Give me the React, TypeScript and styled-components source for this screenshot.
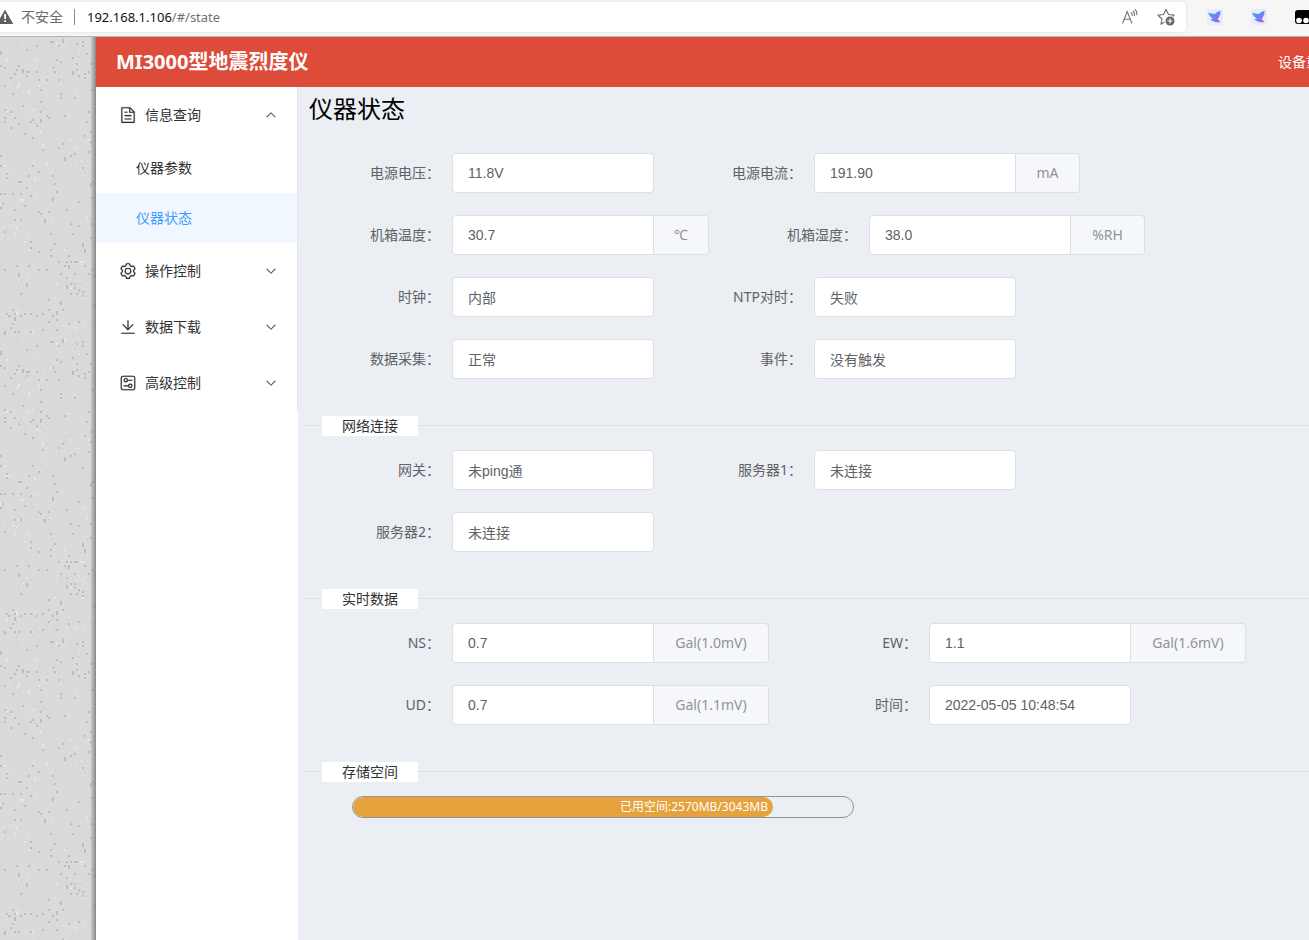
import React, { useId } from 'react';
import styled, { createGlobalStyle } from 'styled-components';

const uiFont = '"Noto Sans", "Noto Sans CJK SC", sans-serif';
const fieldFont = '"Liberation Sans", "Noto Sans CJK SC", sans-serif';

const GlobalStyle = createGlobalStyle`
  *, *::before, *::after { box-sizing: border-box; }
  body {
    margin: 0;
    font-family: ${uiFont};
    font-size: 14px;
    line-height: 20px;
    color: #303133;
    overflow: hidden;
  }
  button { font: inherit; color: inherit; border: 0; background: none; padding: 0; cursor: pointer; }
  svg { display: block; flex: none; }
`;

const Window = styled.div`
  display: flex;
  flex-direction: column;
  min-height: 100vh;
`;

/* Browser toolbar */
const BrowserBar = styled.div`
  display: flex;
  align-items: center;
  height: 37px;
  padding: 2px 0 4px;
  overflow: hidden;
  background: #f6f6f6;
  border-bottom: 1px solid #b4b4b4;
`;

const AddressField = styled.div`
  display: flex;
  align-items: center;
  flex: 1;
  height: 30px;
  padding-right: 11px;
  background: #fff;
  border-radius: 0 4px 4px 0;
  box-shadow: 0 0 3px rgba(0, 0, 0, 0.12);
  white-space: nowrap;
`;

const Insecure = styled.span`
  display: flex;
  align-items: center;
  gap: 7px;
  color: #6a6a6a;
`;

const Separator = styled.span`
  width: 1px;
  height: 16px;
  margin: 0 12px 0 11px;
  background: #8a8a8a;
`;

const Url = styled.span`
  flex: 1;
  font-size: 13px;
  color: #6f6f6f;
  b { font-weight: 400; color: #111; }
`;

const AddressActions = styled.span`
  display: flex;
  gap: 18px;
`;

const Extensions = styled.div`
  display: flex;
  align-items: center;
  flex: none;
  gap: 28px;
  width: 123px;
  padding-left: 21px;
`;

/* Page */
const Desktop = styled.div`
  display: flex;
  flex: 1;
`;

const Wallpaper = styled.div`
  position: relative;
  flex: none;
  width: 96px;
  overflow: hidden;
  background: #dadada;
  svg { position: absolute; inset: 0; }
  &::after {
    content: '';
    position: absolute;
    inset: 0 0 0 auto;
    width: 6px;
    background: linear-gradient(to right, rgba(90, 90, 90, 0), rgba(90, 90, 90, 0.65));
  }
`;

const Application = styled.div`
  display: flex;
  flex-direction: column;
  flex: 1;
  min-width: 0;
`;

const Header = styled.header`
  display: flex;
  align-items: center;
  justify-content: space-between;
  height: 50px;
  padding-left: 20px;
  overflow: hidden;
  color: #fff;
  background: #dd4b39;
`;

const Brand = styled.h1`
  margin: 0;
  font-size: 20px;
  line-height: 52px;
  font-weight: 700;
`;

const HeaderAction = styled.button`
  width: 31px;
  white-space: nowrap;
  text-align: left;
`;

const Body = styled.div`
  display: flex;
  flex: 1;
`;

const Aside = styled.aside`
  flex: none;
  width: 202px;
  background: #fff;
`;

const Menu = styled.nav`
  border-right: 1px solid #e6e6e6;
`;

const MenuGroup = styled.button`
  display: flex;
  align-items: center;
  gap: 8px;
  width: 100%;
  height: 56px;
  padding: 0 20px 0 23px;
  text-align: left;
  span { flex: 1; }
`;

const MenuItem = styled.a<{ $active?: boolean }>`
  display: block;
  height: 50px;
  padding-left: 40px;
  line-height: 50px;
  text-decoration: none;
  color: ${(p) => (p.$active ? '#409eff' : '#303133')};
  background: ${(p) => (p.$active ? '#f0f7ff' : '#fff')};
`;

const Main = styled.main`
  flex: 1;
  min-width: 0;
  padding-left: 4px;
  overflow: hidden;
  background: #ebeef3;
`;

const PageTitle = styled.h2`
  margin: 0 0 22px;
  padding-left: 7px;
  font-size: 24px;
  line-height: 44px;
  font-weight: 400;
  color: #000;
`;

const Row = styled.div`
  display: flex;
  gap: 10px;
  margin-bottom: 22px;
`;

const Item = styled.div`
  display: flex;
  flex: none;
`;

const Label = styled.label`
  width: 150px;
  padding-right: 12px;
  line-height: 40px;
  text-align: right;
  color: #606266;
`;

const Input = styled.input<{ $joined: boolean }>`
  width: 202px;
  height: 40px;
  padding: 0 15px;
  border: 1px solid #dcdfe6;
  border-radius: ${(p) => (p.$joined ? '4px 0 0 4px' : '4px')};
  outline: 0;
  font-family: ${fieldFont};
  font-size: 14px;
  color: #606266;
  background: #fff;
`;

const Unit = styled.span<{ $width: number }>`
  width: ${(p) => p.$width}px;
  border: 1px solid #dcdfe6;
  border-left: 0;
  border-radius: 0 4px 4px 0;
  line-height: 38px;
  text-align: center;
  color: #909399;
  background: #f5f7fa;
`;

const Divider = styled.div`
  display: flex;
  align-items: center;
  height: 1px;
  margin: 46px 0 24px;
  padding-left: 20px;
  background: #dcdfe6;
`;

const DividerText = styled.h3`
  margin: 0;
  padding: 0 20px;
  font-size: 14px;
  line-height: 20px;
  font-weight: 400;
  color: #303133;
  background: #fff;
`;

const Progress = styled.div`
  width: 502px;
  height: 22px;
  margin-left: 50px;
  border: 1px solid #909399;
  border-radius: 11px;
  overflow: hidden;
`;

const ProgressFill = styled.div`
  height: 20px;
  padding-right: 5px;
  border-radius: 10px;
  font-size: 12px;
  line-height: 20px;
  text-align: right;
  white-space: nowrap;
  color: #fff;
  background: #e6a23c;
`;

const glyphs = {
  document:
    'M832 384H576V128H192v768h640zm-26.496-64L640 154.496V320zM160 64h480l256 256v608a32 32 0 0 1-32 32H160a32 32 0 0 1-32-32V96a32 32 0 0 1 32-32m160 448h384v64H320zm0-192h160v64H320zm0 384h384v64H320z',
  setting:
    'M600.704 64a32 32 0 0 1 30.464 22.208l35.2 109.376c14.784 7.232 28.928 15.36 42.432 24.512l112.384-24.192a32 32 0 0 1 34.432 15.36L944.32 364.8a32 32 0 0 1-4.032 37.504l-77.12 85.12a357.12 357.12 0 0 1 0 49.024l77.12 85.248a32 32 0 0 1 4.032 37.504l-88.704 153.6a32 32 0 0 1-34.432 15.296L708.8 803.904c-13.44 9.088-27.648 17.28-42.368 24.512l-35.264 109.376A32 32 0 0 1 600.704 960H423.296a32 32 0 0 1-30.464-22.208L357.696 828.48a351.616 351.616 0 0 1-42.56-24.64l-112.32 24.256a32 32 0 0 1-34.432-15.36L79.68 659.2a32 32 0 0 1 4.032-37.504l77.12-85.248a357.12 357.12 0 0 1 0-48.896l-77.12-85.248A32 32 0 0 1 79.68 364.8l88.704-153.6a32 32 0 0 1 34.432-15.296l112.32 24.256c13.568-9.152 27.776-17.408 42.56-24.64l35.2-109.312A32 32 0 0 1 423.232 64H600.64zm-23.424 64H446.72l-36.352 113.088-24.512 11.968a294.113 294.113 0 0 0-34.816 20.096l-22.656 15.36-116.224-25.088-65.28 113.152 79.68 88.192-1.92 27.136a293.12 293.12 0 0 0 0 40.192l1.92 27.136-79.808 88.192 65.344 113.152 116.224-25.024 22.656 15.296a294.113 294.113 0 0 0 34.816 20.096l24.512 11.968L446.72 896h130.688l36.48-113.152 24.448-11.904a288.282 288.282 0 0 0 34.752-20.096l22.592-15.296 116.288 25.024 65.28-113.152-79.744-88.192 1.92-27.136a293.12 293.12 0 0 0 0-40.256l-1.92-27.136 79.808-88.128-65.344-113.152-116.288 24.96-22.592-15.232a287.616 287.616 0 0 0-34.752-20.096l-24.448-11.904L577.344 128zM512 320a192 192 0 1 1 0 384 192 192 0 0 1 0-384m0 64a128 128 0 1 0 0 256 128 128 0 0 0 0-256',
  download:
    'M160 832h704a32 32 0 1 1 0 64H160a32 32 0 1 1 0-64m384-253.696 236.288-236.352 45.248 45.248L508.8 704 192 387.2l45.248-45.248L480 584.704V128h64z',
  setUp:
    'M224 160a64 64 0 0 0-64 64v576a64 64 0 0 0 64 64h576a64 64 0 0 0 64-64V224a64 64 0 0 0-64-64zm0-64h576a128 128 0 0 1 128 128v576a128 128 0 0 1-128 128H224A128 128 0 0 1 96 800V224A128 128 0 0 1 224 96M384 416a64 64 0 1 0 0-128 64 64 0 0 0 0 128m0 64a128 128 0 1 1 0-256 128 128 0 0 1 0 256M480 320h256q32 0 32 32t-32 32H480q-32 0-32-32t32-32m160 416a64 64 0 1 0 0-128 64 64 0 0 0 0 128m0 64a128 128 0 1 1 0-256 128 128 0 0 1 0 256M288 640h256q32 0 32 32t-32 32H288q-32 0-32-32t32-32',
  arrow:
    'M831.872 340.864 512 652.672 192.128 340.864a30.592 30.592 0 0 0-42.752 0 29.12 29.12 0 0 0 0 41.6L489.664 714.24a32 32 0 0 0 44.672 0l340.288-331.712a29.12 29.12 0 0 0 0-41.728 30.592 30.592 0 0 0-42.752 0z',
};

type GlyphName = keyof typeof glyphs;

function Glyph({ name, size, flip }: { name: GlyphName; size: number; flip?: boolean }) {
  return (
    <svg width={size} height={size} viewBox="0 0 1024 1024" fill="currentColor" aria-hidden="true">
      <path
        d={glyphs[name]}
        transform={flip ? 'rotate(180 512 512)' : undefined}
        stroke="currentColor"
        strokeWidth={name === 'arrow' ? 24 : 8}
      />
    </svg>
  );
}

function Group({ icon, open, children }: { icon: GlyphName; open?: boolean; children: string }) {
  return (
    <MenuGroup type="button" aria-expanded={!!open}>
      <Glyph name={icon} size={18} />
      <span>{children}</span>
      <Glyph name="arrow" size={12} flip={open} />
    </MenuGroup>
  );
}

type FieldProps = { label: string; value: string; unit?: string; unitWidth?: number };

function Field({ label, value, unit, unitWidth = 64 }: FieldProps) {
  const id = useId();
  return (
    <Item>
      <Label htmlFor={id}>{label}：</Label>
      <Input id={id} defaultValue={value} readOnly $joined={!!unit} />
      {unit && <Unit $width={unitWidth}>{unit}</Unit>}
    </Item>
  );
}

/* Seeded speckles for the textured wallpaper tile */
function speckles(count: number, width: number, height: number, seed: number) {
  let s = seed;
  const next = () => {
    s = (s * 16807) % 2147483647;
    return s / 2147483647;
  };
  let d = '';
  for (let i = 0; i < count; i++) {
    const x = Math.floor((next() * width) / 2) * 2;
    const y = Math.floor((next() * height) / 2) * 2;
    const h = next() > 0.92 ? 4 : 2;
    d += `M${x} ${y}h2v${h}h-2z`;
  }
  return d;
}

const darkSpecks = speckles(190, 96, 300, 7919);
const midSpecks = speckles(420, 96, 300, 3571);
const lightSpecks = speckles(60, 96, 300, 1213);

function Texture() {
  return (
    <svg width="96" height="100%" aria-hidden="true">
      <defs>
        <pattern id="grain" width="96" height="300" patternUnits="userSpaceOnUse">
          <path d={midSpecks} fill="#d6d6d6" />
          <path d={lightSpecks} fill="#e6e6e6" />
          <path d={darkSpecks} fill="#bdbdbd" />
        </pattern>
      </defs>
      <rect width="96" height="100%" fill="url(#grain)" />
    </svg>
  );
}

function Bird({ id }: { id: string }) {
  return (
    <svg width="16" height="16" viewBox="0 0 16 16" aria-hidden="true">
      <defs>
        <linearGradient id={id} x1="0" y1="0" x2="1" y2="1">
          <stop offset="0" stopColor="#35a4ff" />
          <stop offset="0.55" stopColor="#6b84f8" />
          <stop offset="1" stopColor="#a05cf0" />
        </linearGradient>
      </defs>
      <rect width="16" height="16" rx="2" fill="#e8edf9" />
      <path
        d="M1 3.500C3.500 4.600 5.500 4.800 8 5 9 3.500 11 2.300 14.500 1.800 13.300 2.800 13 3.600 12.800 4.400L14.500 4.800 12.900 5.800C12.600 7.600 11.800 8.800 10.600 9.800L13.500 13.200C10 13.400 6 12.800 3.200 10.200L6.200 9.800C4 8.600 1.800 6.600 1 3.500Z"
        fill={`url(#${id})`}
      />
    </svg>
  );
}

export default function App() {
  return (
    <Window>
      <GlobalStyle />
      <BrowserBar>
        <AddressField>
          <Insecure>
            <svg width="14" height="16" viewBox="0 0 14 16" aria-hidden="true">
              <path d="M5 1.500 12.500 14.500H-2.500Z" fill="#5f5f5f" stroke="#5f5f5f" strokeLinejoin="round" />
              <path d="M4.200 5h1.800v5H4.200zM4.200 11.200h1.800V13H4.200z" fill="#fff" />
            </svg>
            不安全
          </Insecure>
          <Separator />
          <Url>
            <b>192.168.1.106</b>/#/state
          </Url>
          <AddressActions>
            <button type="button" aria-label="朗读此页内容">
              <svg width="18" height="18" viewBox="0 0 18 18" fill="none" stroke="#737373" strokeWidth="1.1" aria-hidden="true">
                <path d="M1.500 15.500 6.200 3.500 11 15.500M3.300 11.200h6M10 4.500q1.600 1.300 1.200 3.500M11.800 2.800q2.400 2 1.600 5M13.600 1.200q3 2.600 2 6" />
              </svg>
            </button>
            <button type="button" aria-label="添加到收藏夹">
              <svg width="18" height="18" viewBox="0 0 18 18" fill="none" aria-hidden="true">
                <path d="M7.500 14 4 16.200 5 11 1 7.200 6.500 6.500 9 1.500 11.500 6.500 17 7.200 15.800 8.500" stroke="#737373" strokeWidth="1.2" strokeLinejoin="round" />
                <circle cx="13" cy="13" r="4.500" fill="#666" />
                <path d="M13 10.500v5M10.500 13h5" stroke="#fff" strokeWidth="1.200" />
              </svg>
            </button>
          </AddressActions>
        </AddressField>
        <Extensions>
          <Bird id="bird-a" />
          <Bird id="bird-b" />
          <svg width="16" height="16" viewBox="0 0 16 16" aria-hidden="true">
            <rect y="1" width="16" height="14" rx="3" fill="#000" />
            <circle cx="4" cy="11.500" r="2.800" fill="#fff" />
            <circle cx="11" cy="11.500" r="2.800" fill="#fff" />
          </svg>
        </Extensions>
      </BrowserBar>

      <Desktop>
        <Wallpaper>
          <Texture />
        </Wallpaper>
        <Application>
          <Header>
            <Brand>MI3000型地震烈度仪</Brand>
            <HeaderAction type="button">设备重启</HeaderAction>
          </Header>
          <Body>
            <Aside>
              <Menu>
                <Group icon="document" open>信息查询</Group>
                <MenuItem href="#/param">仪器参数</MenuItem>
                <MenuItem href="#/state" $active>仪器状态</MenuItem>
                <Group icon="setting">操作控制</Group>
                <Group icon="download">数据下载</Group>
                <Group icon="setUp">高级控制</Group>
              </Menu>
            </Aside>
            <Main>
              <PageTitle>仪器状态</PageTitle>
              <Row>
                <Field label="电源电压" value="11.8V" />
                <Field label="电源电流" value="191.90" unit="mA" unitWidth={64} />
              </Row>
              <Row>
                <Field label="机箱温度" value="30.7" unit="℃" unitWidth={55} />
                <Field label="机箱湿度" value="38.0" unit="%RH" unitWidth={74} />
              </Row>
              <Row>
                <Field label="时钟" value="内部" />
                <Field label="NTP对时" value="失败" />
              </Row>
              <Row>
                <Field label="数据采集" value="正常" />
                <Field label="事件" value="没有触发" />
              </Row>
              <Divider>
                <DividerText>网络连接</DividerText>
              </Divider>
              <Row>
                <Field label="网关" value="未ping通" />
                <Field label="服务器1" value="未连接" />
              </Row>
              <Row>
                <Field label="服务器2" value="未连接" />
              </Row>
              <Divider>
                <DividerText>实时数据</DividerText>
              </Divider>
              <Row>
                <Field label="NS" value="0.7" unit="Gal(1.0mV)" unitWidth={115} />
                <Field label="EW" value="1.1" unit="Gal(1.6mV)" unitWidth={115} />
              </Row>
              <Row>
                <Field label="UD" value="0.7" unit="Gal(1.1mV)" unitWidth={115} />
                <Field label="时间" value="2022-05-05 10:48:54" />
              </Row>
              <Divider>
                <DividerText>存储空间</DividerText>
              </Divider>
              <Progress role="progressbar" aria-label="存储空间" aria-valuenow={2570} aria-valuemin={0} aria-valuemax={3043}>
                <ProgressFill style={{ width: `${Math.floor((2570 / 3043) * 100)}%` }}>已用空间:2570MB/3043MB</ProgressFill>
              </Progress>
            </Main>
          </Body>
        </Application>
      </Desktop>
    </Window>
  );
}
